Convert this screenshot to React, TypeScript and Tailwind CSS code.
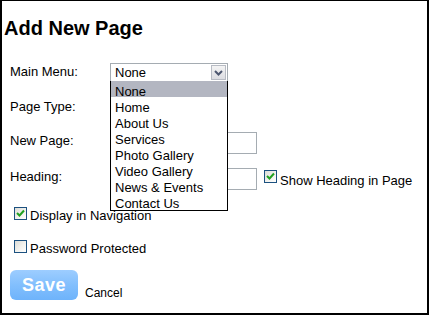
import React from "react";

const font = { fontFamily: '"Liberation Sans", Arial, sans-serif' };

function Check({ checked }: { checked: boolean }) {
  return (
    <span className="relative block w-[13px] h-[13px] shrink-0 border border-[#1c5180] bg-gradient-to-br from-[#dcdcd7] via-[#f0f0ec] to-white">
      {checked && (
        <svg
          className="absolute left-[1px] top-[1px]"
          width="9"
          height="9"
          viewBox="0 0 9 9"
        >
          <path
            d="M1 4 L3.5 6.5 L8 1.5"
            fill="none"
            stroke="#21a121"
            strokeWidth="2"
          />
        </svg>
      )}
    </span>
  );
}

const items = [
  "None",
  "Home",
  "About Us",
  "Services",
  "Photo Gallery",
  "Video Gallery",
  "News & Events",
  "Contact Us",
];

export default function App() {
  return (
    <div
      className="relative w-[429px] h-[315px] box-border bg-white border-t border-l-2 border-r-2 border-b-2 border-black text-black text-[13px]"
      style={font}
    >
      <h1 className="mt-[15px] ml-[2px] text-[20px] leading-[24px] font-bold">
        Add New Page
      </h1>

      {/* Main Menu */}
      <div className="mt-[23px] flex items-start h-[19px]">
        <div className="w-[108px] pl-[8px] pt-[1px] leading-[15px]">Main Menu:</div>
        <div className="relative w-[118px] h-[19px] box-border border border-[#a5acb2] bg-white">
          <div className="pl-[4px] pt-[1px] leading-[15px]">None</div>
          <div className="absolute right-[1px] top-[1px] w-[15px] h-[15px] box-border border border-[#b8bcc4] bg-gradient-to-b from-[#f4f4f4] to-[#dcdde2] flex items-center justify-center">
            <svg width="9" height="6" viewBox="0 0 9 6">
              <path d="M1 1 L4.5 4.5 L8 1" fill="none" stroke="#4d5770" strokeWidth="2" />
            </svg>
          </div>
        </div>
      </div>

      {/* Page Type */}
      <div className="mt-[17px] flex items-start h-[15px]">
        <div className="w-[108px] pl-[8px] leading-[15px]">Page Type:</div>
      </div>

      {/* New Page */}
      <div className="mt-[18px] flex items-start h-[22px]">
        <div className="w-[108px] pl-[8px] pt-[1px] leading-[15px]">New Page:</div>
        <div className="w-[147px] h-[22px] box-border border border-[#a5acb2] bg-white" />
      </div>

      {/* Heading */}
      <div className="mt-[14px] flex items-start h-[22px]">
        <div className="w-[108px] pl-[8px] pt-[1px] leading-[15px]">Heading:</div>
        <div className="w-[147px] h-[22px] box-border border border-[#a5acb2] bg-white" />
        <div className="ml-[7px] mt-[2px]">
          <Check checked />
        </div>
        <div className="ml-[3px] mt-[5px] leading-[15px]">Show Heading in Page</div>
      </div>

      {/* Display in Navigation */}
      <div className="mt-[17px] ml-[12px] flex items-start h-[13px]">
        <Check checked />
        <div className="ml-[3px] mt-[1px] leading-[15px]">Display in Navigation</div>
      </div>

      {/* Password Protected */}
      <div className="mt-[20px] ml-[12px] flex items-start h-[13px]">
        <Check checked={false} />
        <div className="ml-[3px] mt-[1px] leading-[15px]">Password Protected</div>
      </div>

      {/* Buttons */}
      <div className="mt-[17px] ml-[8px] flex items-start">
        <button
          className="w-[68px] h-[30px] rounded-[6px] bg-gradient-to-b from-[#9dcdff] via-[#82bffd] to-[#6eb3fb] text-white font-bold text-[18px] leading-[30px] tracking-[0.5px]"
          style={font}
        >
          Save
        </button>
        <div className="ml-[7px] mt-[16px] text-[12px] leading-[14px]">Cancel</div>
      </div>

      {/* Open dropdown list */}
      <div className="absolute left-[108px] top-[80px] w-[118px] box-border border-l border-r border-b border-black bg-white pb-[1px]">
        {items.map((it, i) => (
          <div
            key={it}
            className={
              "h-[16px] box-border pl-[4px] pt-[3px] leading-[15px] whitespace-nowrap " +
              (i === 0 ? "bg-[#b3b6c1]" : "")
            }
          >
            {it}
          </div>
        ))}
      </div>
    </div>
  );
}
